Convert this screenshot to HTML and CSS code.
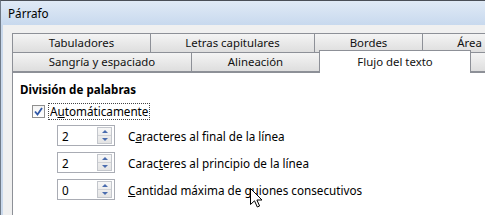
FILE: index.html
```html
<!DOCTYPE html>
<html>
  <head>
    <meta charset="UTF-8" />
    <title>Párrafo</title>
    <link rel="stylesheet" href="styles.css">
  </head>
  <body>
    <div class="window">
      <div class="titlebar">Párrafo</div>
      <div class="client">
        <div class="tabs">
          <div class="tab-row">
            <div class="tab w-tab">Tabuladores</div>
            <div class="tab w-letras">Letras capitulares</div>
            <div class="tab w-bordes">Bordes</div>
            <div class="tab w-area">Área</div>
          </div>
          <div class="tab-row">
            <div class="tab w-sangria">Sangría y espaciado</div>
            <div class="tab w-alin">Alineación</div>
            <div class="tab selected w-flujo">Flujo del texto</div>
            <div class="tab w-rest"></div>
          </div>
        </div>
        <div class="panel">
          <div class="section">División de palabras</div>
          <div class="check-row">
            <span class="checkbox">
              <svg width="11" height="11" viewBox="0 0 11 11">
                <path d="M2 5.5 L4.5 8.5 L9 2" fill="none" stroke="#3058a8" stroke-width="1.8"/>
              </svg>
            </span>
            <span class="focus">A<u>u</u>tomáticamente</span>
          </div>
          <div class="spin-row">
            <div class="spin">
              <span class="spin-value">2</span>
              <span class="spin-btns"><span class="up"></span><span class="down"></span></span>
            </div>
            <span class="spin-label">C<u>a</u>racteres al final de la línea</span>
          </div>
          <div class="spin-row">
            <div class="spin">
              <span class="spin-value">2</span>
              <span class="spin-btns"><span class="up"></span><span class="down"></span></span>
            </div>
            <span class="spin-label">Carac<u>t</u>eres al principio de la línea</span>
          </div>
          <div class="spin-row">
            <div class="spin">
              <span class="spin-value">0</span>
              <span class="spin-btns"><span class="up"></span><span class="down"></span></span>
            </div>
            <span class="spin-label"><u>C</u>antidad máxima de guiones consecutivos</span>
          </div>
          <div class="section next">Saltos</div>
        </div>
      </div>
    </div>
    <svg class="cursor" width="13" height="20" viewBox="0 0 13 20">
      <path d="M0.5 0.5 L0.5 16.5 L4.5 12.8 L7.3 19 L9.6 18 L6.9 12 L12 12 Z" fill="#fff" stroke="#000" stroke-width="1"/>
    </svg>
  </body>
</html>
```

FILE: styles.css
```css
* {
  margin: 0;
  padding: 0;
  box-sizing: border-box;
}
body {
  width: 485px;
  height: 215px;
  overflow: hidden;
  font-family: 'Noto Sans', 'Open Sans', sans-serif;
  font-size: 11.7px;
  color: #000;
  background: #f0f0f0;
  position: relative;
}
.window {
  height: 215px;
  overflow: hidden;
  border-left: 1px solid #707b88;
  border-top: 1px solid #4a4f57;
  background: #c9d8eb;
}
.titlebar {
  height: 24px;
  padding-left: 7px;
  line-height: 25px;
  font-size: 11.7px;
  background: linear-gradient(#e0eaf6, #c8d9ee);
}
.client {
  margin-left: 2px;
  height: 190px;
  background: #f0f0f0;
  padding: 8px 0 0 9px;
}
.tab-row {
  display: flex;
  height: 19px;
}
.tab {
  flex: none;
  height: 20px;
  border: 1px solid #8d9097;
  margin-right: -1px;
  background: linear-gradient(#f4f4f4, #dedede);
  text-align: center;
  line-height: 18px;
  font-size: 11.4px;
  color: #111;
  white-space: nowrap;
  overflow: hidden;
}
.tab.selected {
  position: relative;
  z-index: 2;
  height: 23px;
  margin-top: -2px;
  background: #fff;
  border-bottom: none;
  line-height: 21px;
}
.w-tab { width: 139px; }
.w-letras { width: 165px; }
.w-bordes { width: 109px; }
.w-area { width: 95px; }
.w-sangria { width: 180px; }
.w-alin { width: 129px; }
.w-flujo { width: 152px; }
.w-rest { width: 40px; }
.panel {
  position: relative;
  z-index: 1;
  margin-top: 1px;
  height: 160px;
  background: #fff;
  border: 1px solid #8d9097;
  border-right: none;
  padding: 8px 0 0 7px;
}
.section {
  font-weight: bold;
  font-size: 11.6px;
  height: 18px;
  line-height: 18px;
}
.section.next {
  margin-top: 21px;
}
.check-row {
  display: flex;
  align-items: center;
  height: 18px;
  margin: 3px 0 0 12px;
  gap: 3px;
}
.checkbox {
  width: 13px;
  height: 13px;
  border: 1px solid #8f8f8f;
  background: linear-gradient(#f4f4f4, #fff);
  display: flex;
  align-items: center;
  justify-content: center;
}
.focus {
  border: 1px dotted #444;
  padding: 0 1px;
  line-height: 15px;
}
.spin-row {
  display: flex;
  align-items: center;
  height: 21px;
  margin: 6px 0 0 37px;
}
.check-row + .spin-row {
  margin-top: 5px;
}
.spin {
  width: 58px;
  height: 21px;
  border: 1px solid #a9acb4;
  display: flex;
  align-items: center;
  background: #fff;
  margin-right: 13px;
}
.spin-value {
  flex: 1;
  padding-left: 4px;
}
.spin-btns {
  width: 15px;
  height: 17px;
  margin-right: 2px;
  display: flex;
  flex-direction: column;
  border: 1px solid #c3c6cc;
  background: linear-gradient(#f7f7f7, #e4e4e4);
}
.spin-btns span {
  flex: 1;
  display: flex;
  align-items: center;
  justify-content: center;
}
.spin-btns .up {
  border-bottom: 1px solid #d0d2d6;
}
.spin-btns .up:before {
  content: '';
  border-left: 3px solid transparent;
  border-right: 3px solid transparent;
  border-bottom: 3px solid #4a6cae;
}
.spin-btns .down:before {
  content: '';
  border-left: 3px solid transparent;
  border-right: 3px solid transparent;
  border-top: 3px solid #4a6cae;
}
.spin-label {
  white-space: nowrap;
}
.cursor {
  position: absolute;
  z-index: 5;
  left: 250px;
  top: 188px;
}
```
